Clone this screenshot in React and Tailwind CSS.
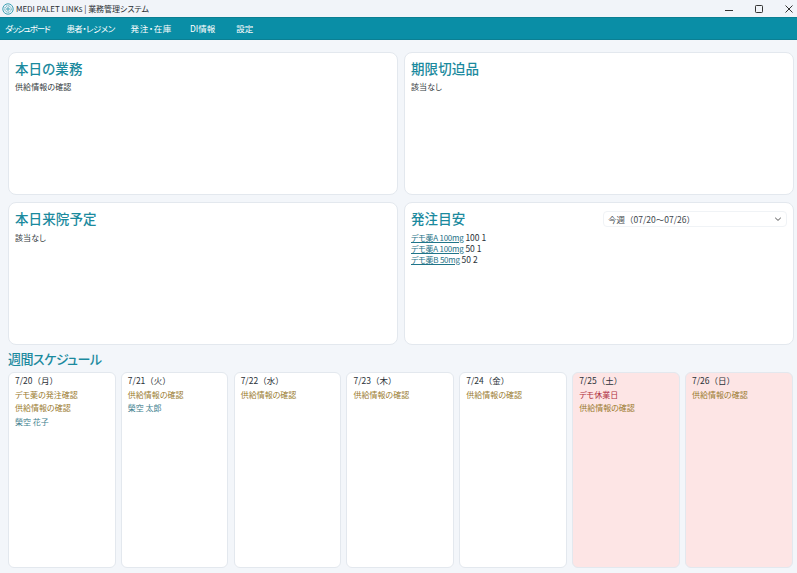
function Card({ title, children, right, bodyClass = "mt-[3px]" }) {
  return (
    <section className="bg-white rounded-lg border border-[#e3e8ee] px-[6px] pt-[6px] min-w-0">
      <div className="flex items-start justify-between">
        <h2 className="text-[13.5px] leading-[19px] font-medium text-[#1b8a9e] tracking-[0.1px]">{title}</h2>
        {right}
      </div>
      <div className={bodyClass}>{children}</div>
    </section>
  );
}
const Note = ({ children }) => <p className="text-[8px] leading-[11px] tracking-[0.1px] text-[#333a40]">{children}</p>;
const Drug = ({ name, rest }) => (
  <div className="text-[8.5px] leading-[11px] text-[#2b3238]">
    <span className="underline text-[#1f7488] text-[8px] tracking-[-0.25px]">{name}</span> {rest}
  </div>
);
const days = [
  { d: "7/20（月）", items: [["デモ薬の発注確認", "g"], ["供給情報の確認", "g"], ["榮空 花子", "t"]] },
  { d: "7/21（火）", items: [["供給情報の確認", "g"], ["榮空 太郎", "t"]] },
  { d: "7/22（水）", items: [["供給情報の確認", "g"]] },
  { d: "7/23（木）", items: [["供給情報の確認", "g"]] },
  { d: "7/24（金）", items: [["供給情報の確認", "g"]] },
  { d: "7/25（土）", off: true, items: [["デモ休業日", "r"], ["供給情報の確認", "g"]] },
  { d: "7/26（日）", off: true, items: [["供給情報の確認", "g"]] },
];
const color = { g: "text-[#9a7b2f]", t: "text-[#3f7f8f]", r: "text-[#b0303f]" };
export default function App() {
  return (
    <div className="w-[797px] h-[573px] overflow-hidden flex flex-col bg-[#f3f6fa] [font-feature-settings:'palt']" style={{ fontFamily: '"Noto Sans CJK JP", Inter, sans-serif' }}>
      <header className="h-[17px] shrink-0 flex items-center bg-[#f1f4f9]">
        <svg width="12" height="12" viewBox="0 0 12 12" className="ml-[2px]" fill="none" stroke="#2a97ab" strokeWidth="0.9">
          <circle cx="6" cy="6" r="5.2" /><circle cx="6" cy="6" r="3.2" strokeDasharray="1.2 0.6" /><circle cx="6" cy="6" r="1.2" />
        </svg>
        <span className="ml-[2px] text-[8px] tracking-[-0.05px] text-[#2a2f33]">MEDI PALET LINKs | 業務管理システム</span>
        <div className="ml-auto flex items-center gap-[20px] pr-[3px]">
          <svg width="10" height="10" viewBox="0 0 10 10" stroke="#333" fill="none"><path d="M1 6.5h8" /></svg>
          <svg width="10" height="10" viewBox="0 0 10 10" stroke="#333" fill="none"><rect x="1.5" y="1.5" width="7" height="7" rx="0.8" /></svg>
          <svg width="10" height="10" viewBox="0 0 10 10" stroke="#333" fill="none"><path d="M1.5 1.5l7 7M8.5 1.5l-7 7" /></svg>
        </div>
      </header>
      <nav className="h-[23px] shrink-0 flex items-center pl-[5px] bg-[#0a8ea6] border-t border-b border-[#0b7f93] text-[8.5px] text-white">
        <span className="tracking-[-1.2px]">ダッシュボード</span>
        <span className="ml-[17px] tracking-[-0.55px]">患者・レジメン</span>
        <span className="ml-[16px] tracking-[0.6px]">発注・在庫</span>
        <span className="ml-[18px]">DI情報</span>
        <span className="ml-[21px]">設定</span>
      </nav>
      <main className="flex-1 min-h-0 flex flex-col pl-[8px] pr-[3px] pt-[12px] pb-[5px]">
        <div className="grid grid-cols-2 grid-rows-[143px_143px] gap-x-[6px] gap-y-[7px] shrink-0">
          <Card title="本日の業務"><Note>供給情報の確認</Note></Card>
          <Card title="期限切迫品"><Note>該当なし</Note></Card>
          <Card title="本日来院予定" bodyClass="mt-[4px]"><Note>該当なし</Note></Card>
          <Card title="発注目安" bodyClass="mt-[4px]" right={
            <div className="w-[184px] h-[16px] mt-[2px] rounded bg-white border border-[#f0f3f6] flex items-center justify-between px-[4px] text-[8.5px] text-[#40474d]">
              <span className="[font-feature-settings:'palt'_0]">今週（07/20〜07/26）</span>
              <svg width="8" height="8" viewBox="0 0 8 8" fill="none" stroke="#444" strokeWidth="0.9"><path d="M1.2 2.8L4 5.4l2.8-2.6" /></svg>
            </div>}>
            <Drug name="デモ薬A 100mg" rest="100 1" />
            <Drug name="デモ薬A 100mg" rest="50 1" />
            <Drug name="デモ薬B 50mg" rest="50 2" />
          </Card>
        </div>
        <h2 className="mt-[4px] text-[13px] leading-[20px] font-medium text-[#1b8a9e] tracking-[-0.5px]">週間スケジュール</h2>
        <div className="mt-[3px] mr-[1.5px] flex-1 min-h-0 grid grid-cols-7 gap-[5.3px]">
          {days.map((x) => (
            <div key={x.d} className={"rounded-md border border-[#e3e8ee] px-[6px] pt-[1px] text-[8px] leading-[13.5px] " + (x.off ? "bg-[#fde5e5]" : "bg-white")}>
              <div className="text-[8.5px] text-[#2b3238] [font-feature-settings:'palt'_0]">{x.d}</div>
              {x.items.map(([t, c]) => <div key={t} className={color[c]}>{t}</div>)}
            </div>
          ))}
        </div>
      </main>
    </div>
  );
}
